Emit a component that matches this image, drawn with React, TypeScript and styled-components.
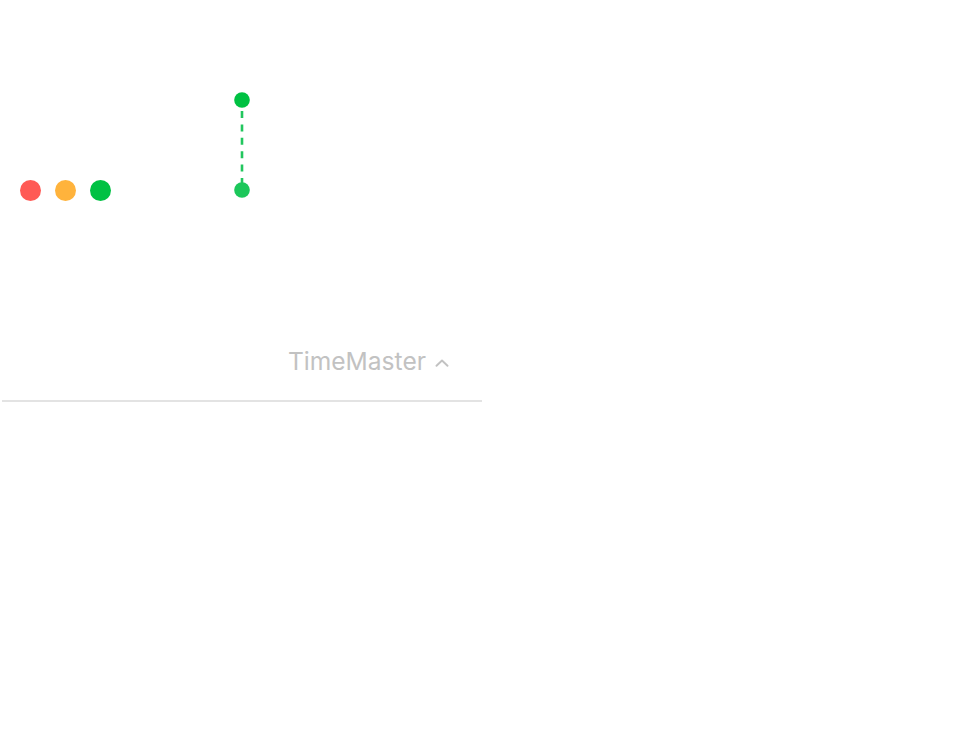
import * as React from 'react'
import styled, { createGlobalStyle } from 'styled-components'

const GlobalStyle = createGlobalStyle`
  html, body {
    margin: 0;
    padding: 0;
    background: #ffffff;
  }
  body {
    font-family: 'Inter', 'Noto Sans', sans-serif;
  }
`

const Panel = styled.div`
  width: 480px;
  margin-left: 2px;
  padding-top: 92px;
  display: flex;
  flex-direction: column;
`

const Stage = styled.div`
  display: grid;
  grid-template-columns: 1fr;
`

const Lights = styled.div`
  grid-area: 1 / 1;
  align-self: end;
  justify-self: start;
  display: flex;
  gap: 14px;
  padding-left: 18px;
`

const Light = styled.span<{ $color: string }>`
  width: 21px;
  height: 21px;
  border-radius: 50%;
  background: ${(p) => p.$color};
`

const Connector = styled.svg`
  grid-area: 1 / 1;
  justify-self: center;
  display: block;
`

const TitleRow = styled.div`
  margin-top: 146px;
  padding: 0 33px 24px 0;
  display: flex;
  justify-content: flex-end;
  align-items: center;
  gap: 9px;
  border-bottom: 2px solid #e3e3e3;
`

const Title = styled.span`
  font-size: 24.6px;
  line-height: 29px;
  color: #c2c2c2;
  font-weight: 400;
`

const Chevron = styled.svg`
  display: block;
  margin-top: 2px;
`

const App = () => {
  return (
    <>
      <GlobalStyle />
      <Panel>
        <Stage>
          <Lights>
            <Light $color="#ff5a55" />
            <Light $color="#ffb33c" />
            <Light $color="#00c143" />
          </Lights>
          <Connector width="16" height="109" viewBox="0 0 16 109">
            <circle cx="8" cy="8" r="7.8" fill="#00c142" />
            <line
              x1="8"
              y1="19"
              x2="8"
              y2="91"
              stroke="#22c65e"
              strokeWidth="2.6"
              strokeDasharray="7 6.4"
            />
            <circle cx="8" cy="98" r="7.8" fill="#1cc75a" />
          </Connector>
        </Stage>
        <TitleRow>
          <Title>TimeMaster</Title>
          <Chevron width="14" height="8" viewBox="0 0 14 8">
            <path
              d="M1.5 6.8 L7 1.5 L12.5 6.8"
              fill="none"
              stroke="#c2c2c2"
              strokeWidth="1.9"
              strokeLinecap="round"
              strokeLinejoin="round"
            />
          </Chevron>
        </TitleRow>
      </Panel>
    </>
  )
}

export default App
